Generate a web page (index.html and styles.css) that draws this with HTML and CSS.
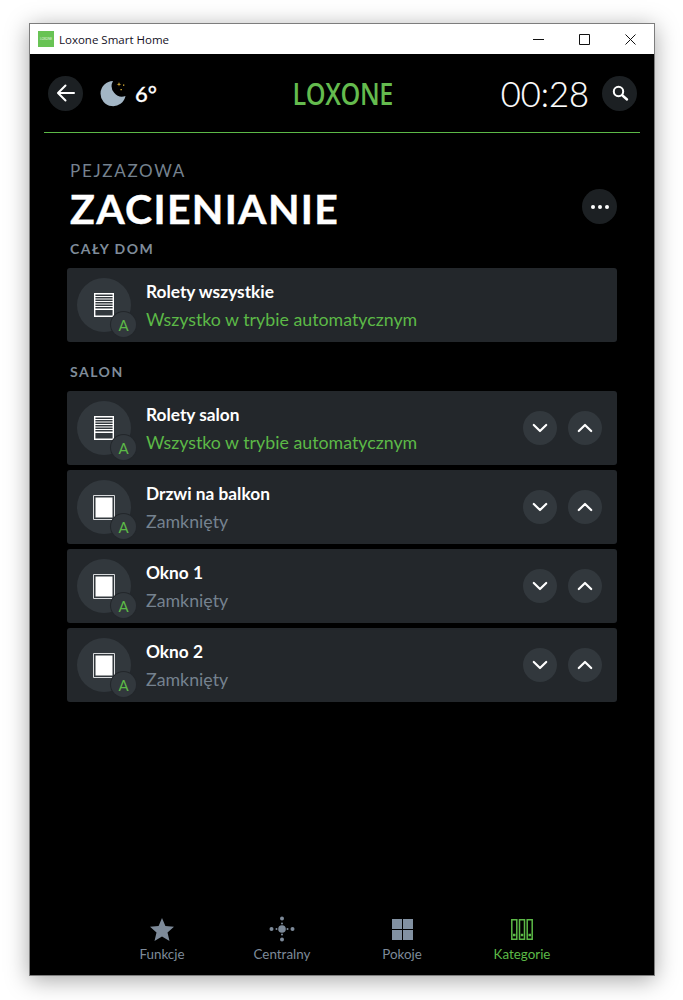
FILE: index.html
```html
<!DOCTYPE html>
<html lang="pl">
<head>
	<meta charset="utf-8">
	<title>Loxone Smart Home</title>
	<link rel="stylesheet" href="styles.css">
</head>
<body>
	<svg class="defs" width="0" height="0">
		<symbol id="blind" viewBox="0 0 20 24">
			<path fill="none" stroke="#fff" stroke-width="1.4" d="M.7.7h18.600v22.600H.7z"/>
			<path fill="#fff" d="M1 3h18v1H1zM1 5.500h18v1H1zM1 8h18v1H1zM1 10.500h18v1H1zM1 13h18v1H1zM1 15.500h18v1.500H1z"/>
		</symbol>
		<symbol id="window" viewBox="0 0 22 25">
			<path fill="none" stroke="#d8dadc" stroke-width="1" d="M.5.5h21v24H.5z"/>
			<rect x="2.500" y="2.500" width="17" height="20" fill="#fff"/>
		</symbol>
		<symbol id="down" viewBox="0 0 16 10">
			<path fill="none" stroke="#fff" stroke-width="2.200" stroke-linecap="round" stroke-linejoin="round" d="M1.800 2l6.200 6 6.200-6"/>
		</symbol>
		<symbol id="up" viewBox="0 0 16 10">
			<path fill="none" stroke="#fff" stroke-width="2.200" stroke-linecap="round" stroke-linejoin="round" d="M1.800 8L8 2l6.200 6"/>
		</symbol>
	</svg>

	<div class="window">
		<div class="titlebar">
			<span class="appIcon">LOXONE</span>
			<span class="appName">Loxone Smart Home</span>
			<div class="winBtns">
				<svg width="11" height="11" viewBox="0 0 11 11"><path stroke="#111" d="M0 5.500h11"/></svg>
				<svg width="11" height="11" viewBox="0 0 11 11"><path fill="none" stroke="#111" d="M.5.5h10v10H.5z"/></svg>
				<svg width="11" height="11" viewBox="0 0 11 11"><path stroke="#111" d="M.5.5l10 10M10.500.5l-10 10"/></svg>
			</div>
		</div>

		<div class="app">
			<div class="header">
				<div class="headLeft">
					<div class="round">
						<svg width="20" height="18" viewBox="0 0 20 18"><path fill="none" stroke="#fff" stroke-width="2" stroke-linecap="round" stroke-linejoin="round" d="M9.500 1.500L2 9l7.500 7.500M2.500 9H18"/></svg>
					</div>
					<svg class="moon" width="27" height="27" viewBox="0 0 27 27">
						<path fill="#a3b6c5" d="M13 1A12.600 12.600 0 1 0 25.500 16 10.500 10.500 0 0 1 13 1z"/>
						<path fill="#e8b93a" d="M19 2l.5 1.800 1.800.5-1.800.5-.5 1.800-.5-1.800-1.800-.5 1.800-.5zM23 4.500h1.300v1.300H23zM20.500 9h1.300v1.300h-1.300z"/>
					</svg>
					<span class="temp">6°</span>
				</div>
				<div class="logo">LOXONE</div>
				<div class="headRight">
					<span class="clock">00:28</span>
					<div class="round">
						<svg width="18" height="18" viewBox="0 0 18 18"><circle cx="7.500" cy="7.500" r="4.700" fill="none" stroke="#fff" stroke-width="2"/><path stroke="#fff" stroke-width="2.400" stroke-linecap="round" d="M11.500 11.500l4.500 4"/></svg>
					</div>
				</div>
			</div>
			<div class="headLine"></div>

			<div class="content">
				<div class="pageHead">
					<div>
						<div class="overTitle">PEJZAZOWA</div>
						<h1>ZACIENIANIE</h1>
					</div>
					<div class="round more"><i></i><i></i><i></i></div>
				</div>

				<div class="section first">CAŁY DOM</div>
				<div class="card">
					<div class="cardIcon"><svg width="20" height="24"><use href="#blind"/></svg><span class="badge">A</span></div>
					<div class="cardText">
						<div class="name">Rolety wszystkie</div>
						<div class="state on">Wszystko w trybie automatycznym</div>
					</div>
				</div>

				<div class="section">SALON</div>
				<div class="list">
					<div class="card">
						<div class="cardIcon"><svg width="20" height="24"><use href="#blind"/></svg><span class="badge">A</span></div>
						<div class="cardText">
							<div class="name">Rolety salon</div>
							<div class="state on">Wszystko w trybie automatycznym</div>
						</div>
						<div class="cardBtns">
							<div class="btn"><svg width="16" height="10"><use href="#down"/></svg></div>
							<div class="btn"><svg width="16" height="10"><use href="#up"/></svg></div>
						</div>
					</div>
					<div class="card">
						<div class="cardIcon"><svg width="22" height="25"><use href="#window"/></svg><span class="badge">A</span></div>
						<div class="cardText">
							<div class="name">Drzwi na balkon</div>
							<div class="state">Zamknięty</div>
						</div>
						<div class="cardBtns">
							<div class="btn"><svg width="16" height="10"><use href="#down"/></svg></div>
							<div class="btn"><svg width="16" height="10"><use href="#up"/></svg></div>
						</div>
					</div>
					<div class="card">
						<div class="cardIcon"><svg width="22" height="25"><use href="#window"/></svg><span class="badge">A</span></div>
						<div class="cardText">
							<div class="name">Okno 1</div>
							<div class="state">Zamknięty</div>
						</div>
						<div class="cardBtns">
							<div class="btn"><svg width="16" height="10"><use href="#down"/></svg></div>
							<div class="btn"><svg width="16" height="10"><use href="#up"/></svg></div>
						</div>
					</div>
					<div class="card">
						<div class="cardIcon"><svg width="22" height="25"><use href="#window"/></svg><span class="badge">A</span></div>
						<div class="cardText">
							<div class="name">Okno 2</div>
							<div class="state">Zamknięty</div>
						</div>
						<div class="cardBtns">
							<div class="btn"><svg width="16" height="10"><use href="#down"/></svg></div>
							<div class="btn"><svg width="16" height="10"><use href="#up"/></svg></div>
						</div>
					</div>
				</div>
			</div>

			<div class="tabs">
				<div class="tab">
					<svg width="24" height="23" viewBox="0 0 24 23"><path fill="#7d8a99" d="M12 0l3.400 8 8.600.7-6.500 5.700 2 8.500L12 18.400 4.500 22.900l2-8.500L0 8.700 8.600 8z"/></svg>
					<span>Funkcje</span>
				</div>
				<div class="tab">
					<svg width="26" height="26" viewBox="0 0 26 26" fill="#7d8a99"><circle cx="13" cy="13" r="3.800"/><circle cx="13" cy="2.500" r="2"/><circle cx="13" cy="23.500" r="2"/><circle cx="2.500" cy="13" r="2"/><circle cx="23.500" cy="13" r="2"/><circle cx="13" cy="7.500" r="1"/><circle cx="13" cy="18.500" r="1"/><circle cx="7.500" cy="13" r="1"/><circle cx="18.500" cy="13" r="1"/></svg>
					<span>Centralny</span>
				</div>
				<div class="tab">
					<svg width="21" height="21" viewBox="0 0 21 21" fill="#8291a2"><path d="M0 0h10v10H0zM11 0h10v10H11zM0 11h10v10H0zM11 11h10v10H11z"/></svg>
					<span>Pokoje</span>
				</div>
				<div class="tab active">
					<svg width="22" height="21" viewBox="0 0 22 21" fill="none" stroke="#5cb947" stroke-width="1.500"><path d="M.8.8h5v19.400h-5zM8.500.8h5v19.400h-5zM16.200.8h5v19.400h-5z"/><path stroke-width="2.500" d="M2 16h2.500M9.800 16h2.500M17.500 16H20"/></svg>
					<span>Kategorie</span>
				</div>
			</div>
		</div>
	</div>
</body>
</html>
```

FILE: styles.css
```css
body {
	margin: 0;
	padding: 23px 28px 24px 29px;
	background: #fff;
	font-family: "Lato", sans-serif;
}

.defs {
	display: block;
	height: 0;
}

.window {
	height: 951px;
	border: 1px solid #7d7d7d;
	display: flex;
	flex-direction: column;
	box-shadow: 0 4px 22px rgba(0, 0, 0, 0.35);
}

.titlebar {
	height: 30px;
	flex: none;
	display: flex;
	align-items: center;
	background: #fff;
	padding-left: 8px;
}

.appIcon {
	width: 16px;
	height: 16px;
	background: #68c354;
	color: #e6f5e0;
	font-size: 3px;
	line-height: 16px;
	text-align: center;
}

.appName {
	margin-left: 5px;
	font-family: "Open Sans", sans-serif;
	font-size: 11.5px;
	color: #14101e;
}

.winBtns {
	margin-left: auto;
	display: flex;
	gap: 35px;
	padding-right: 18px;
}

.app {
	flex: 1;
	background: #000;
	display: flex;
	flex-direction: column;
	color: #fff;
}

.header {
	height: 78px;
	padding: 0 17px 0 18px;
	display: grid;
	grid-template-columns: 1fr auto 1fr;
	align-items: center;
}

.headLeft, .headRight {
	display: flex;
	align-items: center;
}

.headRight {
	justify-content: flex-end;
}

.round {
	width: 35px;
	height: 35px;
	border-radius: 50%;
	background: #1c2023;
	display: flex;
	align-items: center;
	justify-content: center;
}

.moon {
	margin-left: 17px;
}

.temp {
	margin-left: 8px;
	font-size: 22px;
	font-weight: 500;
	-webkit-text-stroke: 0.3px #fff;
}

.logo {
	font-family: "Open Sans", sans-serif;
	font-size: 30px;
	font-weight: 600;
	color: #64bb4e;
	letter-spacing: -0.5px;
	transform: scaleX(0.84);
}

.clock {
	font-size: 34.5px;
	font-weight: 300;
	margin-right: 13px;
	-webkit-text-stroke: 0.2px #fff;
}

.headLine {
	height: 1px;
	margin: 0 14px;
	background: #5cb947;
	flex: none;
}

.content {
	padding: 0 37px;
}

.pageHead {
	display: flex;
	justify-content: space-between;
	align-items: flex-end;
	padding: 28px 0 0 3px;
}

.overTitle {
	font-size: 17px;
	letter-spacing: 1.7px;
	color: #75828f;
	line-height: 20px;
}

h1 {
	margin: 0;
	font-size: 41px;
	font-weight: 700;
	letter-spacing: 1.3px;
	line-height: 56px;
	-webkit-text-stroke: 0.4px #fff;
}

.more {
	gap: 3px;
	margin-bottom: 13px;
}

.more i {
	width: 4px;
	height: 4px;
	border-radius: 50%;
	background: #fff;
}

.section {
	padding-left: 3px;
	margin: 21px 0 11px;
	font-size: 14px;
	font-weight: 700;
	letter-spacing: 1.5px;
	color: #7f8c9a;
	line-height: 17px;
}

.section.first {
	margin: 3px 0 11px;
}

.list {
	display: flex;
	flex-direction: column;
	gap: 5px;
}

.card {
	height: 74px;
	border-radius: 3px;
	background: #23272b;
	display: flex;
	align-items: center;
	padding: 0 15px 0 10px;
}

.cardIcon {
	width: 54px;
	height: 54px;
	border-radius: 50%;
	background: #32383d;
	position: relative;
	display: flex;
	align-items: center;
	justify-content: center;
	flex: none;
}

.badge {
	position: absolute;
	right: -5px;
	bottom: -5px;
	width: 25px;
	height: 25px;
	border-radius: 50%;
	background: #32383d;
	box-shadow: 0 0 0 1px #23272b;
	color: #5cb947;
	font-size: 15px;
	line-height: 26px;
	text-align: center;
}

.cardText {
	margin-left: 15px;
	flex: 1;
	padding-top: 1px;
}

.name {
	font-size: 17.3px;
	font-weight: 700;
	line-height: 20px;
}

.state {
	margin-top: 7px;
	font-size: 17.8px;
	line-height: 20px;
	color: #75828f;
}

.state.on {
	color: #5cb947;
}

.cardBtns {
	display: flex;
	gap: 11px;
}

.btn {
	width: 34px;
	height: 34px;
	border-radius: 50%;
	background: #32383d;
	display: flex;
	align-items: center;
	justify-content: center;
}

.tabs {
	margin-top: auto;
	padding-bottom: 13px;
	display: flex;
	justify-content: center;
}

.tab {
	width: 120px;
	display: grid;
	grid-template-rows: 26px 16px;
	row-gap: 4px;
	justify-items: center;
	align-items: center;
	color: #7d8a99;
	font-size: 13.4px;
}

.tab.active {
	color: #5cb947;
}
```
